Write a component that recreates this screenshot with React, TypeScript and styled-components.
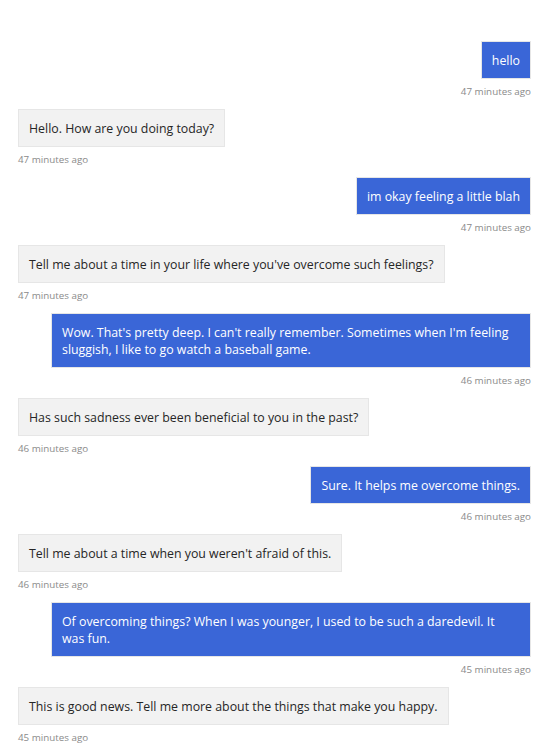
import React from "react";
import styled, { createGlobalStyle } from "styled-components";

const GlobalStyle = createGlobalStyle`
  html, body { margin: 0; padding: 0; background: #ffffff; }
  body { font-family: "Open Sans", "Noto Sans", sans-serif; }
`;

const Transcript = styled.div`
  display: flex;
  flex-direction: column;
  padding: 41px 18px 0 18px;
`;

const Group = styled.div<{ $user: boolean }>`
  display: flex;
  flex-direction: column;
  align-items: ${(p) => (p.$user ? "flex-end" : "flex-start")};
  margin-bottom: 10px;
`;

const Bubble = styled.div<{ $user: boolean }>`
  box-sizing: border-box;
  max-width: 480px;
  padding: 9.5px 10px;
  border: 1px solid #e6e6e6;
  background: ${(p) => (p.$user ? "#3a66d7" : "#f2f2f2")};
  color: ${(p) => (p.$user ? "#ffffff" : "#262626")};
  font-size: 12.35px;
  line-height: 17px;
`;

const Timestamp = styled.div`
  margin-top: 6px;
  font-size: 9.8px;
  line-height: 14px;
  color: #8a8a8a;
`;

type Msg = { user: boolean; text: string; time: string };

const messages: Msg[] = [
  { user: true, text: "hello", time: "47 minutes ago" },
  { user: false, text: "Hello. How are you doing today?", time: "47 minutes ago" },
  { user: true, text: "im okay feeling a little blah", time: "47 minutes ago" },
  {
    user: false,
    text: "Tell me about a time in your life where you've overcome such feelings?",
    time: "47 minutes ago",
  },
  {
    user: true,
    text: "Wow. That's pretty deep. I can't really remember. Sometimes when I'm feeling sluggish, I like to go watch a baseball game.",
    time: "46 minutes ago",
  },
  { user: false, text: "Has such sadness ever been beneficial to you in the past?", time: "46 minutes ago" },
  { user: true, text: "Sure. It helps me overcome things.", time: "46 minutes ago" },
  { user: false, text: "Tell me about a time when you weren't afraid of this.", time: "46 minutes ago" },
  {
    user: true,
    text: "Of overcoming things? When I was younger, I used to be such a daredevil. It was fun.",
    time: "45 minutes ago",
  },
  {
    user: false,
    text: "This is good news. Tell me more about the things that make you happy.",
    time: "45 minutes ago",
  },
];

export default function App() {
  return (
    <>
      <GlobalStyle />
      <Transcript>
        {messages.map((m, i) => (
          <Group key={i} $user={m.user}>
            <Bubble $user={m.user}>{m.text}</Bubble>
            <Timestamp>{m.time}</Timestamp>
          </Group>
        ))}
      </Transcript>
    </>
  );
}
